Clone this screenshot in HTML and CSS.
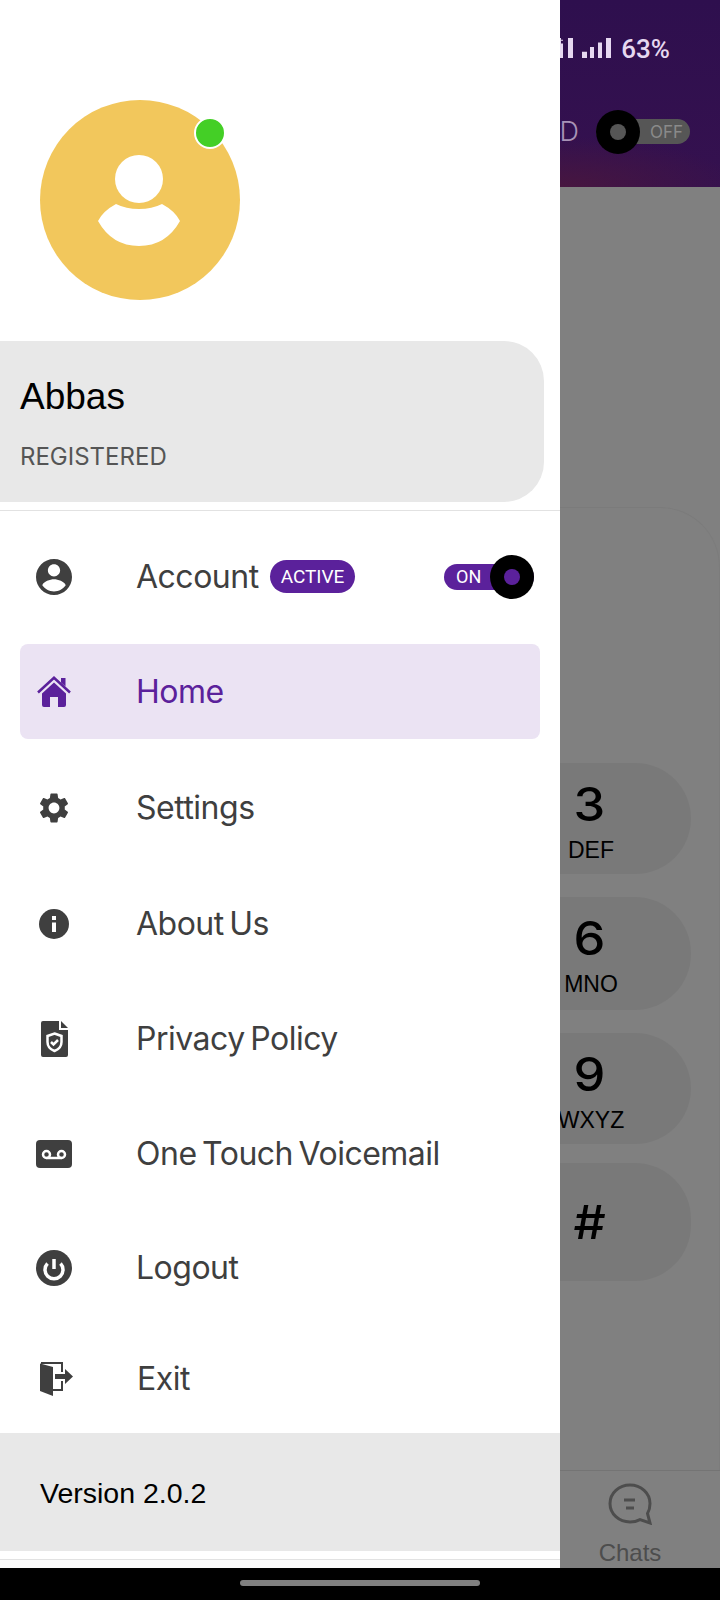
FILE: index.html
```html
<!DOCTYPE html>
<html lang="en">
<head>
<meta charset="utf-8">
<title>Drawer</title>
<link rel="stylesheet" href="styles.css">
</head>
<body>
<div class="screen">
  <div class="app">
    <header class="app-header">
      <div class="status-row">
        <svg class="signal" viewBox="0 0 56 22" preserveAspectRatio="none" aria-hidden="true">
          <path d="M4 2h1V0h1v2h2v1H6v3h2v16H4zM13 0h5v22h-5zM27 15h5v7h-5zM35 10h4v12h-4zM43 5h4v17h-4zM51 0h5v22h-5z"/>
        </svg>
        <span class="battery">63%</span>
      </div>
      <div class="mode-row">
        <span class="mode-letter">D</span>
        <div class="switch switch-off">
          <span class="knob knob-off"><span class="knob-dot"></span></span>
          <span class="switch-label">OFF</span>
        </div>
      </div>
    </header>
    <main class="dial-area">
      <div class="dial-panel">
        <div class="key"><span class="digit">3</span><span class="letters">DEF</span></div>
        <div class="key key-mid"><span class="digit">6</span><span class="letters">MNO</span></div>
        <div class="key"><span class="digit">9</span><span class="letters">WXYZ</span></div>
        <div class="key key-hash"><span class="digit">#</span></div>
      </div>
    </main>
    <footer class="tabbar">
      <div class="tab">
        <svg class="tab-icon" viewBox="0 0 44 42" aria-hidden="true">
          <path class="chat-line" d="M22 2C11 2 2 10 2 20.500S11 39 22 39c3.500 0 7-.8 10-2.400l10 3.400-2.500-9.500C41 28 42 24.500 42 20.500 42 10 33 2 22 2z"/>
          <path class="chat-line" d="M16 17h11M18 25h8"/>
        </svg>
        <span class="tab-label">Chats</span>
      </div>
    </footer>
  </div>

  <aside class="drawer">
    <div class="avatar-wrap">
      <div class="avatar">
        <svg class="avatar-person" viewBox="0 0 82 92" aria-hidden="true">
          <circle cx="41" cy="25" r="24"/>
          <path d="M0 67Q5 57 18 50 28 55 41 55 54 55 64 50 77 57 82 67 68 92 41 92 14 92 0 67z"/>
        </svg>
        <span class="presence"></span>
      </div>
    </div>
    <section class="profile-card">
      <div class="profile-name">Abbas</div>
      <div class="profile-status">REGISTERED</div>
    </section>
    <nav class="menu">
      <div class="menu-row">
        <svg class="icon" viewBox="2 2 20 20" aria-hidden="true"><path d="M12 2C6.480 2 2 6.480 2 12s4.480 10 10 10 10-4.480 10-10S17.520 2 12 2zm0 2.900c1.900 0 3.400 1.500 3.400 3.400s-1.500 3.400-3.400 3.400-3.400-1.500-3.400-3.400 1.500-3.400 3.400-3.400zm0 15.100c-2.700 0-5.100-1.300-6.500-3.400.7-2.100 4.300-3.300 6.500-3.300s5.800 1.200 6.500 3.300c-1.400 2.100-3.800 3.400-6.500 3.400z"/></svg>
        <span class="menu-text">Account</span>
        <span class="badge">ACTIVE</span>
        <div class="switch switch-on">
          <span class="switch-label">ON</span>
          <span class="knob knob-on"><span class="knob-dot knob-dot-on"></span></span>
        </div>
      </div>
      <div class="menu-row menu-row-active">
        <svg class="icon icon-home" viewBox="0 0 34 31" aria-hidden="true">
          <path d="M5 17.500 17 6.500l12 11V29a2 2 0 0 1-2 2h-6V21h-8v10H7a2 2 0 0 1-2-2z"/>
          <path d="M24 2h4.500v8.500L24 6.500z"/>
          <path class="roof" d="M1 16.500 17 1.800l16 14.700"/>
        </svg>
        <span class="menu-text">Home</span>
      </div>
      <div class="menu-row menu-row-push">
        <svg class="icon icon-gear" viewBox="2.500 2 19 20" aria-hidden="true"><path d="M19.140 12.940c.04-.3.06-.61.06-.94 0-.32-.02-.64-.07-.94l2.030-1.580c.18-.14.23-.41.12-.61l-1.920-3.320c-.12-.22-.37-.29-.59-.22l-2.390.96c-.5-.38-1.030-.7-1.620-.94l-.36-2.540c-.04-.24-.24-.41-.48-.41h-3.840c-.24 0-.43.17-.47.41l-.36 2.540c-.59.24-1.130.57-1.620.94l-2.390-.96c-.22-.08-.47 0-.59.22L2.740 8.870c-.12.21-.08.47.12.61l2.030 1.580c-.05.3-.09.63-.09.94s.02.64.07.94l-2.030 1.580c-.18.14-.23.41-.12.61l1.920 3.320c.12.22.37.29.59.22l2.390-.96c.5.38 1.030.7 1.620.94l.36 2.540c.05.24.24.41.48.41h3.840c.24 0 .44-.17.47-.41l.36-2.540c.59-.24 1.130-.56 1.620-.94l2.390.96c.22.08.47 0 .59-.22l1.920-3.320c.12-.22.07-.47-.12-.61l-2.010-1.580zM12 15.600c-1.980 0-3.600-1.620-3.600-3.600s1.620-3.600 3.600-3.600 3.600 1.620 3.600 3.600-1.620 3.600-3.600 3.600z"/></svg>
        <span class="menu-text">Settings</span>
      </div>
      <div class="menu-row menu-row-push">
        <svg class="icon icon-info" viewBox="0 0 30 30" aria-hidden="true">
          <circle cx="15" cy="15" r="15"/>
          <path class="cut" d="M13 13.500h4V23h-4zM13 7h4v4h-4z"/>
        </svg>
        <span class="menu-text">About Us</span>
      </div>
      <div class="menu-row">
        <svg class="icon icon-doc" viewBox="0 0 27 36" aria-hidden="true">
          <path d="M2 0h16v9h9v25a2 2 0 0 1-2 2H2a2 2 0 0 1-2-2V2a2 2 0 0 1 2-2z"/>
          <path d="M20 0l7 7h-7z"/>
          <path class="cut-line" d="M13.500 12.500l7 2.500v6c0 4.500-3 7.500-7 9-4-1.500-7-4.500-7-9v-6z"/>
          <path class="cut-line" d="M10 21l2.500 2.500 4.500-4.500"/>
        </svg>
        <span class="menu-text">Privacy Policy</span>
      </div>
      <div class="menu-row">
        <svg class="icon icon-vm" viewBox="0 0 36 28" aria-hidden="true">
          <rect width="36" height="28" rx="4"/>
          <circle class="cut-line" cx="10.500" cy="14.500" r="3.500"/>
          <circle class="cut-line" cx="25.500" cy="14.500" r="3.500"/>
          <path class="cut-line" d="M10.500 18h15"/>
        </svg>
        <span class="menu-text">One Touch Voicemail</span>
      </div>
      <div class="menu-row menu-row-pull">
        <svg class="icon icon-power" viewBox="0 0 36 36" aria-hidden="true">
          <circle cx="18" cy="18" r="18"/>
          <path class="cut-thick" d="M18 9v10"/>
          <path class="cut-thick" d="M11.500 13.500a9 9 0 1 0 13 0"/>
        </svg>
        <span class="menu-text">Logout</span>
      </div>
      <div class="menu-row menu-row-exit">
        <svg class="icon icon-exit" viewBox="0 0 33 34" aria-hidden="true">
          <path d="M0 1.500 13 5v29L0 29z"/>
          <path class="door-frame" d="M1 1h21v9M22 19v9h-9"/>
          <path d="M15 12h10V7l8 7.500-8 7.500v-5H15z"/>
        </svg>
        <span class="menu-text">Exit</span>
      </div>
    </nav>
    <div class="version-bar">Version 2.0.2</div>
    <div class="drawer-rest"></div>
  </aside>

  <div class="navbar"><span class="home-pill"></span></div>
</div>
</body>
</html>
```

FILE: styles.css
```css
* { box-sizing: border-box; }

html, body {
  margin: 0;
  padding: 0;
  background: #000;
}

body {
  font-family: "Inter", "Liberation Sans", sans-serif;
}

.screen {
  position: relative;
  width: 720px;
  height: 1600px;
  overflow: hidden;
  background: #808080;
}

/* Dimmed app underneath */
.app {
  display: flex;
  flex-direction: column;
  height: 1568px;
}

.app-header {
  height: 187px;
  flex: none;
  padding: 38px 50px 0 0;
  background:
    radial-gradient(ellipse 180px 50px at 560px 187px, #47163f 0%, rgba(71, 22, 63, 0) 100%),
    linear-gradient(#2e0f4e, #35114f);
  color: #e6d8f0;
}

.status-row {
  display: flex;
  justify-content: flex-end;
  align-items: flex-start;
  gap: 10px;
  height: 22px;
}

.signal {
  width: 56px;
  height: 20px;
  fill: #e6d8f0;
}

.battery {
  font-family: "Roboto", sans-serif;
  font-size: 26px;
  font-weight: 500;
  line-height: 22px;
  color: #e6d8f0;
}

.mode-row {
  display: flex;
  justify-content: flex-end;
  align-items: center;
  gap: 17px;
  margin: 59px -20px 0 0;
  height: 25px;
}

.mode-letter {
  font-size: 27px;
  font-weight: 300;
  color: #a893b6;
  line-height: 25px;
}

.switch {
  position: relative;
  height: 25px;
  border-radius: 13px;
  display: flex;
  align-items: center;
}

.switch-off {
  width: 94px;
  background: #565656;
  justify-content: flex-end;
  padding-right: 7px;
}

.switch-on {
  width: 90px;
  height: 26px;
  background: #5b219b;
  margin-left: auto;
  margin-right: -10px;
  padding-left: 12px;
}

.switch-label {
  font-size: 17px;
  color: #8a8a8a;
}

.switch-on .switch-label {
  font-family: "Roboto", sans-serif;
  font-size: 18px;
  color: #fff;
}

.knob {
  position: absolute;
  top: 50%;
  width: 44px;
  height: 44px;
  margin-top: -22px;
  border-radius: 50%;
  background: #000;
  display: flex;
  align-items: center;
  justify-content: center;
}

.knob-off { left: 0; }
.knob-on { right: 0; }

.knob-dot {
  width: 16px;
  height: 16px;
  border-radius: 50%;
  background: #565656;
}

.knob-dot-on { background: #5b219b; }

.dial-area {
  flex: 1;
  min-height: 0;
}

.dial-panel {
  height: 963px;
  margin-top: 320px;
  padding: 255px 28px 0 0;
  border-top: 1px solid #7b7b7b;
  border-right: 1px solid #7c7c7c;
  border-radius: 0 60px 0 0;
  display: flex;
  flex-direction: column;
  align-items: flex-end;
}

.key {
  width: 200px;
  height: 111px;
  margin-bottom: 23px;
  padding-top: 16px;
  border-radius: 56px;
  background: #797979;
  color: #000;
  display: flex;
  flex-direction: column;
  align-items: center;
  font-family: "Liberation Sans", sans-serif;
}

.key-mid { height: 113px; }

.key-hash {
  height: 118px;
  margin-top: -4px;
  margin-bottom: 0;
  padding-top: 0;
  justify-content: center;
}

.digit {
  font-family: "Inter", sans-serif;
  font-weight: 500;
  font-size: 46px;
  line-height: 50px;
  margin-right: 3px;
  transform: scaleX(1.1);
}

.letters {
  font-size: 23px;
  line-height: 28px;
  margin-top: 7px;
}

.tabbar {
  height: 98px;
  flex: none;
  border-top: 1px solid #747474;
  display: flex;
  justify-content: flex-end;
}

.tab {
  width: 140px;
  margin-right: 20px;
  padding-top: 12px;
  display: flex;
  flex-direction: column;
  align-items: center;
  color: #4d4d4d;
}

.tab-icon {
  width: 44px;
  height: 42px;
}

.chat-line {
  fill: none;
  stroke: #4d4d4d;
  stroke-width: 3;
}

.tab-label {
  font-family: "Liberation Sans", sans-serif;
  font-size: 24px;
  line-height: 28px;
  margin-top: 14px;
}

/* Drawer */
.drawer {
  position: absolute;
  left: 0;
  top: 0;
  width: 560px;
  height: 1568px;
  background: #fff;
  display: flex;
  flex-direction: column;
}

.avatar-wrap {
  padding: 100px 0 0 40px;
}

.avatar {
  position: relative;
  width: 200px;
  height: 200px;
  border-radius: 50%;
  background: #f2c75c;
  display: flex;
  justify-content: center;
  padding: 54px 2px 0 0;
}

.avatar-person {
  width: 82px;
  height: 92px;
  fill: #fff;
}

.presence {
  position: absolute;
  left: 154px;
  top: 17px;
  width: 32px;
  height: 32px;
  border: 2px solid #fff;
  border-radius: 50%;
  background: #44cf26;
}

.profile-card {
  width: 544px;
  height: 161px;
  margin-top: 41px;
  padding: 34px 20px 0 20px;
  border-radius: 0 40px 40px 0;
  background: #e8e8e8;
}

.profile-name {
  font-family: "Liberation Sans", sans-serif;
  font-size: 37px;
  line-height: 44px;
  color: #000;
}

.profile-status {
  font-size: 24px;
  line-height: 30px;
  margin-top: 23px;
  color: #555;
}

.menu {
  margin-top: 8px;
  border-top: 1px solid #e2e2e2;
  padding: 18px 20px 0;
  display: flex;
  flex-direction: column;
  gap: 20px;
}

.menu-row {
  height: 95px;
  padding: 0 16px;
  display: flex;
  align-items: center;
  border-radius: 8px;
  color: #3f3f3f;
  fill: #3f3f3f;
}

.menu-row-active {
  background: #ebe3f3;
  color: #5b219b;
  fill: #5b219b;
}

.menu-row-push { margin-top: 1px; }
.menu-row-pull { margin-top: -1px; }
.menu-row-exit { margin-top: -4px; }

.icon {
  width: 36px;
  height: 36px;
  flex: none;
  margin-right: 64px;
}

.icon-home { width: 34px; height: 31px; margin: 0 65px 0 1px; }
.icon-gear { width: 30px; height: 30px; margin: 0 67px 0 3px; }
.icon-info { width: 30px; height: 30px; margin: 0 67px 0 3px; }
.icon-doc { width: 27px; height: 36px; margin: 0 68px 0 5px; }
.icon-vm { width: 36px; height: 28px; }
.icon-exit { width: 33px; height: 34px; margin: 0 64px 0 4px; }

.roof {
  fill: none;
  stroke: #5b219b;
  stroke-width: 2.500;
}

.cut { fill: #fff; }

.cut-line {
  fill: none;
  stroke: #fff;
  stroke-width: 2.500;
}

.cut-thick {
  fill: none;
  stroke: #fff;
  stroke-width: 3.500;
}

.door-frame {
  fill: none;
  stroke: #3f3f3f;
  stroke-width: 2;
}

.menu-text {
  font-family: "Inter", sans-serif;
  font-size: 32px;
  line-height: 40px;
  letter-spacing: -0.5px;
  word-spacing: -3px;
}

.badge {
  margin-left: 11px;
  height: 33px;
  padding: 0 11px;
  border-radius: 17px;
  background: #5b219b;
  color: #fff;
  font-family: "Roboto", sans-serif;
  font-size: 19px;
  line-height: 33px;
}

.version-bar {
  height: 118px;
  margin-top: 7px;
  padding: 2px 0 0 40px;
  background: #e8e8e8;
  color: #000;
  font-family: "Liberation Sans", sans-serif;
  font-size: 28.500px;
  line-height: 116px;
  flex: none;
}

.drawer-rest {
  flex: 1;
  margin-top: 8px;
  border-top: 1px solid #e2e2e2;
  background: #fafafa;
}

.navbar {
  position: absolute;
  left: 0;
  right: 0;
  bottom: 0;
  height: 32px;
  background: #000;
  display: flex;
  justify-content: center;
  padding-top: 12px;
}

.home-pill {
  width: 240px;
  height: 6px;
  border-radius: 3px;
  background: #808080;
}
```
